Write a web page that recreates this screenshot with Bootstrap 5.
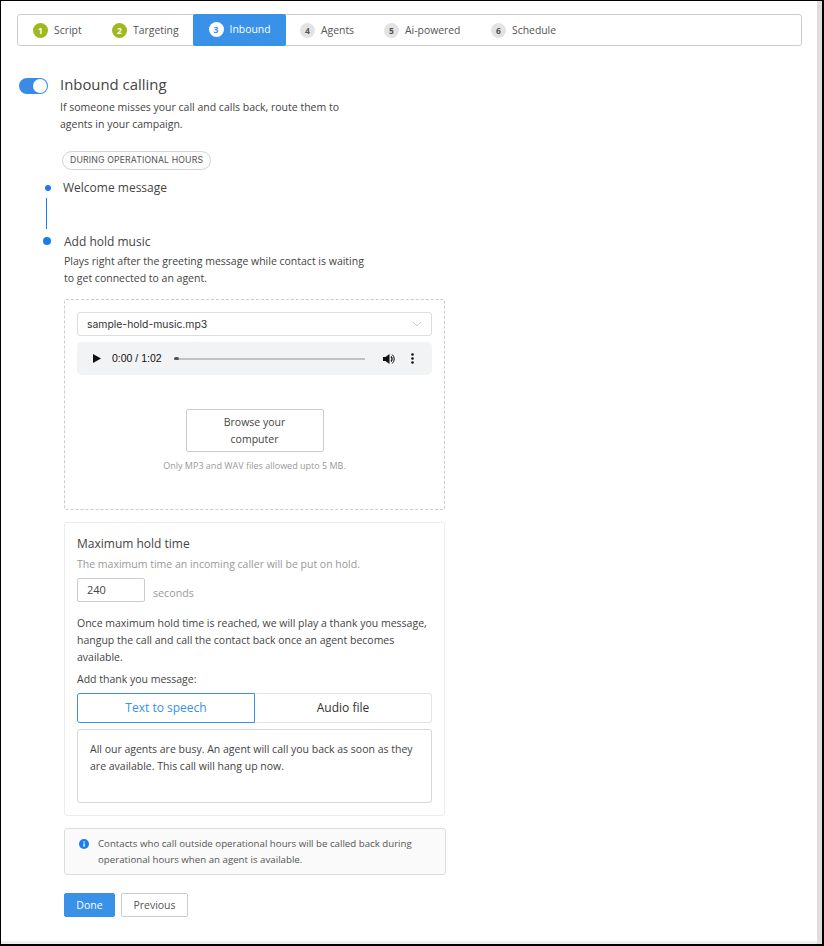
<!DOCTYPE html>
<html lang="en">
<head>
<meta charset="utf-8">
<title>Inbound</title>
<link href="https://cdn.jsdelivr.net/npm/bootstrap@5.3.0/dist/css/bootstrap.min.css" rel="stylesheet">
<style>
html,body{height:946px;overflow:hidden;}
body{font-family:"Open Sans",sans-serif;font-size:10.5px;line-height:17px;color:#444;background:#fff;}
.frame{width:824px;height:946px;border-top:1px solid #000;border-left:1px solid #000;border-right:2px solid #000;border-bottom:2px solid #000;display:flex;overflow:hidden;}
.pagearea{width:816px;flex:none;display:flex;flex-direction:column;}
.pageinner{flex:1;padding:13px 15px 0 16px;}
.hbar{height:3px;background:#eee;flex:none;}
.sbar{flex:1;background:#dedede;}
.stepbar{height:32px;border:1px solid #ccc;border-radius:3px;}
.stepitem{height:32px;margin-top:-1px;display:flex;align-items:center;color:#555;font-size:10.4px;}
.stepnum{width:15px;height:15px;border-radius:50%;display:flex;align-items:center;justify-content:center;font-size:8.5px;font-weight:700;margin-right:6px;background:#e3e3e3;color:#555;}
.stepdone .stepnum{background:#a1b81f;color:#fff;}
.stepnow{background:#3a91e8;color:#fff;border-radius:2px;height:32px;padding-bottom:2px;}
.stepnow .stepnum{background:#fff;color:#3a91e8;}
.titlerow{margin-top:28px;}
.togglebox{width:29px;height:16px;border-radius:8px;background:#3a8ae6;position:relative;margin:4px 12px 0 2px;flex:none;}
.togglebox::after{content:"";position:absolute;right:1px;top:1px;width:14px;height:14px;border-radius:50%;background:#fff;}
.headline{font-size:14.9px;line-height:20px;color:#444;}
.subtext{width:300px;margin-top:5px;}
.chip{display:inline-block;margin:18px 0 0 45px;height:19px;padding:0 7px;border:1px solid #d4d4d4;border-radius:10px;font-family:"Inter",sans-serif;font-size:8.7px;line-height:17px;letter-spacing:.15px;color:#555;background:#fcfcfc;}
.timeline{position:relative;margin-top:9px;padding-left:45px;height:120px;}
.tdot{position:absolute;border-radius:50%;background:#1a7cf0;}
.tline{position:absolute;left:29px;top:19px;width:1px;height:31px;background:#1a7cf0;}
.stepttl{font-size:12px;line-height:17px;color:#444;}
.holdwrap{margin-left:47px;width:381px;}
.dropzone{height:211px;border:1px dashed #ccc;border-radius:2px;padding:12px;}
.fakeselect{height:24px;border:1px solid #ddd;border-radius:3px;padding:0 9px;display:flex;align-items:center;justify-content:space-between;font-family:"Inter",sans-serif;font-size:10.4px;color:#333;}
.player{height:33px;margin-top:6px;background:#f1f3f4;border-radius:5px;display:flex;align-items:center;padding:0 18px 0 16px;font-family:"Liberation Sans",sans-serif;font-size:10.5px;color:#111;}
.ptime{margin:0 12px 0 11px;white-space:nowrap;}
.ptrack{flex:1;height:2px;background:#c1c1c1;position:relative;margin-right:18px;}
.ptrack::before{content:"";position:absolute;left:0;top:-.5px;width:5px;height:3px;border-radius:2px;background:#555;}
.browsebtn{display:block;width:138px;height:43px;margin:34px auto 0;padding:4px 20px;border:1px solid #ccc;border-radius:2px;background:#fff;color:#444;font-size:10.5px;line-height:17px;}
.hinttext{margin-top:7px;text-align:center;font-size:9px;line-height:14px;color:#999;}
.holdcard{height:294px;margin-top:12px;border:1px solid #ececec;border-radius:3px;padding:12px;}
.cardttl{font-size:12px;line-height:17px;color:#444;}
.mutedline{color:#999;margin-top:4px;}
.secrow{margin-top:5px;}
.secinput{width:68px;height:24px;border:1px solid #ccc;border-radius:2px;padding:0 9px;font-size:11px;line-height:22px;color:#444;}
.seclabel{color:#999;margin:7px 0 0 8px;font-size:10.7px;}
.para{margin-top:13px;line-height:17px;}
.thankline{margin-top:5px;}
.tabpair{display:flex;height:30px;margin-top:5px;font-size:12px;}
.tabon,.taboff{flex:1;display:flex;align-items:center;justify-content:center;border:1px solid #e3e3e3;padding-bottom:2px;}
.tabon{color:#3a91e8;border-color:#3a91e8;border-radius:3px 0 0 3px;flex:0 0 178px;}
.taboff{color:#333;border-left:0;border-radius:0 3px 3px 0;}
.msgbox{height:74px;margin-top:6px;border:1px solid #d8d8d8;border-radius:3px;padding:11px 12px;}
.notebox{height:47px;margin:12px -1px 0 0;border:1px solid #ddd;border-radius:3px;background:#fafafa;padding:7px 14px;display:flex;font-size:9.7px;line-height:16px;color:#555;}
.noteicon{flex:none;margin:3px 9px 0 0;}
.actions{margin-top:18px;}
.donebtn,.prevbtn{height:24px;font-size:10.5px;line-height:22px;border-radius:2px;padding:0;}
.donebtn{width:51px;background:#3a91e8;border:1px solid #3a91e8;color:#fff;}
.prevbtn{width:67px;margin-left:6px;background:#fff;border:1px solid #ccc;color:#555;}
</style>
</head>
<body>
<div class="frame">
  <div class="pagearea">
    <div class="pageinner">
    <div class="stepbar d-flex">
      <div class="stepitem stepdone" style="padding-left:15px;width:94px"><span class="stepnum">1</span>Script</div>
      <div class="stepitem stepdone" style="width:81px"><span class="stepnum">2</span>Targeting</div>
      <div class="stepitem stepnow justify-content-center" style="width:93px"><span class="stepnum">3</span>Inbound</div>
      <div class="stepitem" style="padding-left:14px;width:98px"><span class="stepnum">4</span>Agents</div>
      <div class="stepitem" style="width:107px"><span class="stepnum">5</span>Ai-powered</div>
      <div class="stepitem"><span class="stepnum">6</span>Schedule</div>
    </div>
    <div class="titlerow d-flex">
      <div class="togglebox"></div>
      <div>
        <div class="headline">Inbound calling</div>
        <div class="subtext">If someone misses your call and calls back, route them to agents in your campaign.</div>
      </div>
    </div>
    <div class="chip">DURING OPERATIONAL HOURS</div>
    <div class="timeline">
      <span class="tdot" style="left:28px;top:6px;width:6px;height:6px"></span>
      <span class="tline"></span>
      <span class="tdot" style="left:26px;top:58px;width:8px;height:8px"></span>
      <div class="stepttl" style="margin-left:1px">Welcome message</div>
      <div class="stepttl" style="margin:37px 0 0 2px">Add hold music</div>
      <div style="margin:3px 0 0 2px;width:305px">Plays right after the greeting message while contact is waiting to get connected to an agent.</div>
    </div>
    <div class="holdwrap">
      <div class="dropzone">
        <div class="fakeselect">sample-hold-music.mp3
          <svg width="10" height="6" viewBox="0 0 10 6"><path d="M1 1l4 4 4-4" fill="none" stroke="#ccc" stroke-width="1"/></svg>
        </div>
        <div class="player">
          <svg width="8" height="9" viewBox="0 0 8 9"><path d="M0 0l8 4.500-8 4.500z" fill="#111"/></svg>
          <span class="ptime">0:00 / 1:02</span>
          <div class="ptrack"></div>
          <svg width="12" height="12" viewBox="0 0 12 12" class="me-3"><path d="M0 4h2.500L6.500 1v10L2.500 8H0z" fill="#111"/><path d="M8 3.500a3.500 3.500 0 0 1 0 5" fill="none" stroke="#111" stroke-width="1.300"/><path d="M9.200 1.500a6 6 0 0 1 0 9" fill="none" stroke="#111" stroke-width="1"/></svg>
          <svg width="3" height="11" viewBox="0 0 3 11"><circle cx="1.500" cy="1.500" r="1.300" fill="#111"/><circle cx="1.500" cy="5.500" r="1.300" fill="#111"/><circle cx="1.500" cy="9.500" r="1.300" fill="#111"/></svg>
        </div>
        <button type="button" class="browsebtn">Browse your computer</button>
        <div class="hinttext">Only MP3 and WAV files allowed upto 5 MB.</div>
      </div>
      <div class="holdcard">
        <div class="cardttl">Maximum hold time</div>
        <div class="mutedline">The maximum time an incoming caller will be put on hold.</div>
        <div class="secrow d-flex">
          <div class="secinput">240</div>
          <div class="seclabel">seconds</div>
        </div>
        <div class="para">Once maximum hold time is reached, we will play a thank you message, hangup the call and call the contact back once an agent becomes available.</div>
        <div class="thankline">Add thank you message:</div>
        <div class="tabpair">
          <div class="tabon">Text to speech</div>
          <div class="taboff">Audio file</div>
        </div>
        <div class="msgbox">All our agents are busy. An agent will call you back as soon as they are available. This call will hang up now.</div>
      </div>
      <div class="notebox">
        <svg class="noteicon" width="10" height="10" viewBox="0 0 10 10"><circle cx="5" cy="5" r="5" fill="#1a7cf0"/><rect x="4.400" y="4.300" width="1.300" height="3.400" fill="#fff"/><rect x="4.400" y="2.300" width="1.300" height="1.300" fill="#fff"/></svg>
        <div>Contacts who call outside operational hours will be called back during operational hours when an agent is available.</div>
      </div>
      <div class="actions d-flex">
        <button type="button" class="btn donebtn">Done</button>
        <button type="button" class="btn prevbtn">Previous</button>
      </div>
    </div>
    </div>
    <div class="hbar"></div>
  </div>
  <div class="sbar"></div>
</div>
<script src="https://cdn.jsdelivr.net/npm/bootstrap@5.3.0/dist/js/bootstrap.bundle.min.js"></script>
</body>
</html>
